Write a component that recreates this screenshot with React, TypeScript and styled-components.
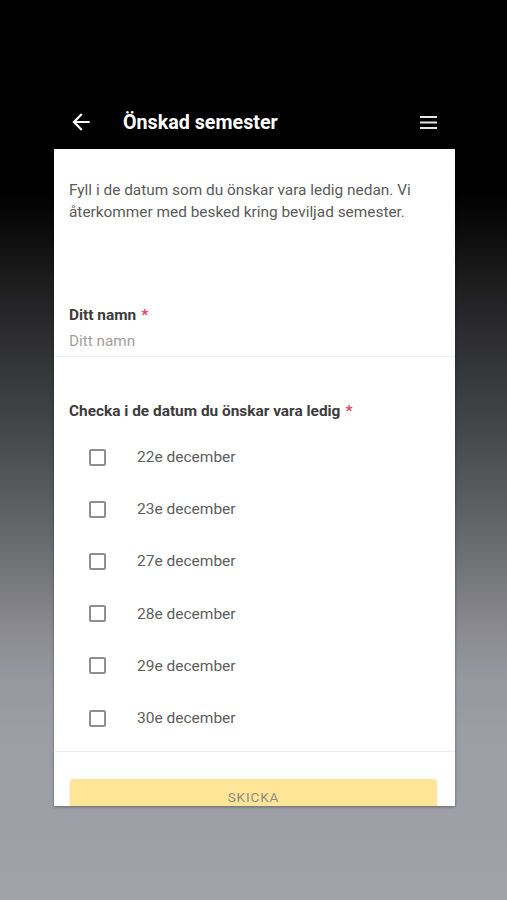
import React from "react";
import styled, { createGlobalStyle } from "styled-components";

const Global = createGlobalStyle`
  html, body { margin: 0; padding: 0; }
  body { font-family: Roboto, "Noto Sans", "Liberation Sans", sans-serif; }
`;

const Page = styled.div`
  width: 507px;
  height: 900px;
  overflow: hidden;
  display: flex;
  flex-direction: column;
  background: linear-gradient(
    to bottom,
    #000 0px,
    #000 190px,
    #0b0b0b 230px,
    #1c1c1d 280px,
    #2b2b2d 330px,
    #38393b 380px,
    #45464a 430px,
    #65666a 530px,
    #8a8a90 630px,
    #97979f 680px,
    #9d9da5 730px,
    #a1a1a9 900px
  );
`;

const Header = styled.header`
  height: 50px;
  margin-top: 97px;
  display: flex;
  align-items: center;
  padding: 0 70px 0 68px;
  color: #fff;
`;

const IconButton = styled.span`
  display: flex;
  align-items: center;
  justify-content: center;
  color: #fff;
`;

const Title = styled.h1`
  flex: 1;
  margin: 0 0 0 29px;
  font-size: 19.7px;
  font-weight: 700;
  color: #fff;
`;

const Card = styled.main`
  margin: 2px 52px 0 54px;
  height: 657px;
  background: #fff;
  overflow: hidden;
  box-shadow: 0 1px 3px rgba(0, 0, 0, 0.35);
  display: flex;
  flex-direction: column;
`;

const Intro = styled.p`
  margin: 30px 0 0;
  padding: 0 15px;
  font-size: 15.4px;
  line-height: 22px;
  color: #5a5a5a;
`;

const Field = styled.div<{ $top: number }>`
  margin-top: ${(p) => p.$top}px;
  padding: 0 15px;
`;

const Label = styled.div`
  font-size: 15.4px;
  line-height: 20px;
  font-weight: 700;
  color: #3c3c3c;
`;

const Required = styled.span`
  color: #e8405f;
  margin-left: 5px;
`;

const Input = styled.input`
  display: block;
  width: 100%;
  box-sizing: border-box;
  border: none;
  outline: none;
  padding: 0 0 5px;
  margin-top: 6px;
  font-family: inherit;
  font-size: 15.3px;
  line-height: 20px;
  color: #333;
  background: transparent;
  &::placeholder {
    color: #a0a0a0;
  }
`;

const Divider = styled.hr<{ $top?: number }>`
  margin: ${(p) => p.$top ?? 0}px 0 0 1px;
  border: none;
  border-top: 1px solid #ececec;
`;

const Options = styled.ul`
  list-style: none;
  margin: 10px 0 0;
  padding: 0;
`;

const Option = styled.li`
  height: 52.2px;
  display: flex;
  align-items: center;
  padding-left: 35px;
`;

const Box = styled.span`
  width: 13px;
  height: 13px;
  border: 2px solid #8e8e8e;
  border-radius: 2px;
  flex: none;
`;

const OptionText = styled.span`
  margin-left: 31px;
  font-size: 15.5px;
  color: #5e5e5e;
`;

const Submit = styled.button`
  margin: 27px 18px 0 16px;
  height: 36px;
  flex: none;
  border: none;
  border-radius: 4px;
  background: #ffe597;
  color: #8e8c84;
  font-family: inherit;
  font-size: 13.5px;
  font-weight: 400;
  letter-spacing: 0.9px;
  box-shadow: 0 1px 2px rgba(0, 0, 0, 0.12);
`;

const dates = ["22e", "23e", "27e", "28e", "29e", "30e"];

export default function App() {
  return (
    <Page>
      <Global />
      <Header>
        <IconButton>
          <svg width="26" height="26" viewBox="0 0 24 24" fill="currentColor">
            <path d="M20 11H7.83l5.59-5.59L12 4l-8 8 8 8 1.41-1.41L7.83 13H20v-2z" />
          </svg>
        </IconButton>
        <Title>Önskad semester</Title>
        <IconButton>
          <svg width="17" height="13" viewBox="0 0 17 13" fill="#e6e6e6">
            <rect x="0" y="0" width="17" height="2" />
            <rect x="0" y="5.5" width="17" height="2" />
            <rect x="0" y="11" width="17" height="2" />
          </svg>
        </IconButton>
      </Header>
      <Card>
        <Intro>
          Fyll i de datum som du önskar vara ledig nedan. Vi återkommer med besked kring beviljad semester.
        </Intro>
        <Field $top={82}>
          <Label>
            Ditt namn<Required>*</Required>
          </Label>
          <Input placeholder="Ditt namn" />
        </Field>
        <Divider />
        <Field $top={44}>
          <Label>
            Checka i de datum du önskar vara ledig<Required>*</Required>
          </Label>
        </Field>
        <Options>
          {dates.map((d) => (
            <Option key={d}>
              <Box />
              <OptionText>{d} december</OptionText>
            </Option>
          ))}
        </Options>
        <Divider $top={7} />
        <Submit disabled>SKICKA</Submit>
      </Card>
    </Page>
  );
}
